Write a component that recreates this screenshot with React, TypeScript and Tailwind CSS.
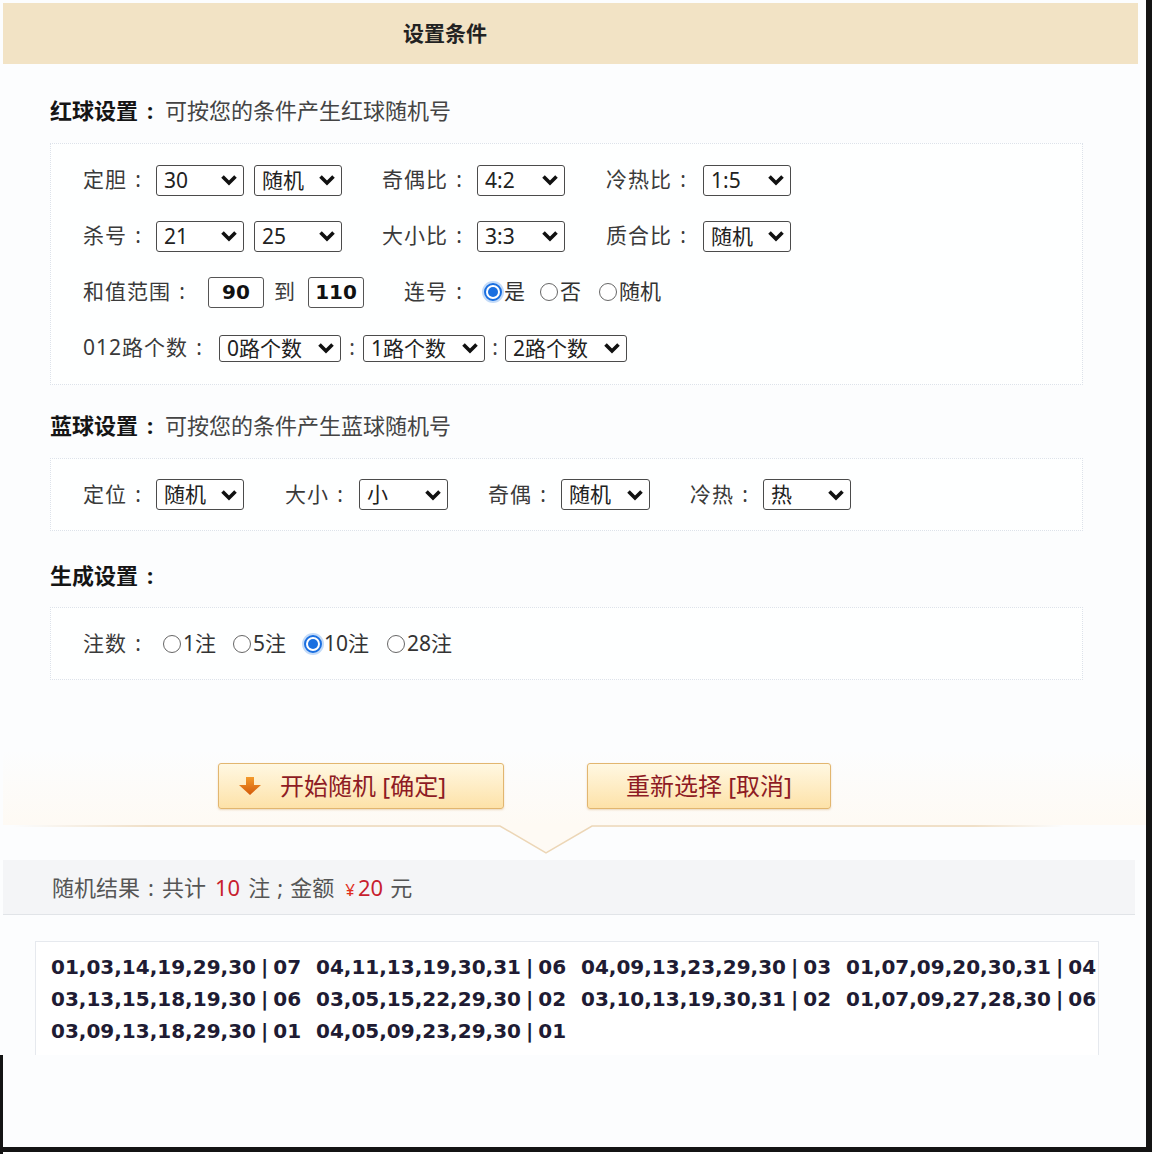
import type { ReactNode } from 'react';

// Lottery random-number settings panel (red ball / blue ball / output)

const results = [
  '01,03,14,19,29,30|07',
  '04,11,13,19,30,31|06',
  '04,09,13,23,29,30|03',
  '01,07,09,20,30,31|04',
  '03,13,15,18,19,30|06',
  '03,05,15,22,29,30|02',
  '03,10,13,19,30,31|02',
  '01,07,09,27,28,30|06',
  '03,09,13,18,29,30|01',
  '04,05,09,23,29,30|01',
];

function Chevron() {
  return (
    <svg width="18" height="12" viewBox="0 0 18 12" className="shrink-0">
      <path d="M2.5 2.5 L9 9 L15.5 2.5" fill="none" stroke="#111" strokeWidth="3.6" strokeLinejoin="miter" />
    </svg>
  );
}

function Select({ value, className }: { value: string; className: string }) {
  return (
    <div
      className={`flex items-center justify-between rounded-[3px] border-[1.5px] border-[#4b4b4b] bg-white pl-[7px] pr-[5px] text-[21px] leading-none text-[#222] ${className}`}
    >
      <span>{value}</span>
      <Chevron />
    </div>
  );
}

function NumInput({ value, className }: { value: string; className: string }) {
  return (
    <div
      className={`flex h-[31px] w-[56px] items-center justify-center rounded-[3px] border-[1.5px] border-[#555] bg-white font-['DejaVu_Sans',sans-serif] text-[20px] font-bold text-[#111] ${className}`}
    >
      {value}
    </div>
  );
}

function Radio({ checked = false, label, className }: { checked?: boolean; label: string; className: string }) {
  return (
    <div className={`flex items-center ${className}`}>
      {checked ? (
        <span className="flex h-[18px] w-[18px] items-center justify-center rounded-full border-2 border-[#1a6fe0] bg-white shadow-[0_0_0_2px_#c3dbf8]">
          <span className="h-[10px] w-[10px] rounded-full bg-[#1a6fe0]" />
        </span>
      ) : (
        <span className="h-[18px] w-[18px] rounded-full border-[1.5px] border-[#666] bg-white" />
      )}
      <span className="ml-[2px] text-[21px] text-[#333]">{label}</span>
    </div>
  );
}

// field label with a centred colon after it
function Label({ children, className = '', colon = true }: { children: ReactNode; className?: string; colon?: boolean }) {
  return (
    <span className={`flex items-center text-[21px] tracking-[1px] text-[#3a3a3a] ${className}`}>
      {children}
      {colon && <span className="inline-block w-[22px] text-center tracking-normal">:</span>}
    </span>
  );
}

function SectionTitle({ title, desc, className }: { title: string; desc?: string; className: string }) {
  return (
    <div className={`flex h-[30px] items-center text-[22px] ${className}`}>
      <span className="font-bold text-[#151515]">{title}</span>
      <span className="inline-block w-[24px] text-center font-bold text-[#151515]">:</span>
      {desc && <span className="ml-[3px] text-[#444]">{desc}</span>}
    </div>
  );
}

function DownArrow() {
  return (
    <svg width="24" height="18" viewBox="0 0 24 18">
      <defs>
        <linearGradient id="arrowFill" x1="0" y1="0" x2="0" y2="1">
          <stop offset="0" stopColor="#f39a2c" />
          <stop offset="1" stopColor="#d35a0a" />
        </linearGradient>
      </defs>
      <path d="M8 0 H16 V8 H23 L12 18 L1 8 H8 Z" fill="url(#arrowFill)" />
    </svg>
  );
}

export default function App() {
  return (
    <div className="relative h-[1154px] w-[1154px] overflow-hidden bg-white font-['Noto_Sans','Noto_Sans_CJK_SC',sans-serif] text-[#333]">
      <div className="h-[1152px] w-[1152px] border-r-[6px] border-b-[5px] border-[#141414] bg-[#fcfdfe] pl-[3px] pt-[3px]">
        <div className="flex h-[61px] w-[1135px] items-center bg-[#f2e3c5] pl-[400px] text-[21px] font-bold text-[#222]">
          设置条件
        </div>

        <div className="pl-[47px]">
          <SectionTitle title="红球设置" desc="可按您的条件产生红球随机号" className="mt-[31px]" />
          <div className="mt-[18px] w-[1033px] border border-dotted border-[#dde2ea] bg-white/70 py-[8px] pl-[32px]">
            <div className="flex h-[56px] items-center">
              <Label>定胆</Label>
              <Select value="30" className="ml-[7px] h-[31px] w-[88px]" />
              <Select value="随机" className="ml-[10px] h-[31px] w-[88px]" />
              <Label className="ml-[40px]">奇偶比</Label>
              <Select value="4:2" className="ml-[7px] h-[31px] w-[88px]" />
              <Label className="ml-[41px]">冷热比</Label>
              <Select value="1:5" className="ml-[9px] h-[31px] w-[88px]" />
            </div>
            <div className="flex h-[56px] items-center">
              <Label>杀号</Label>
              <Select value="21" className="ml-[7px] h-[31px] w-[88px]" />
              <Select value="25" className="ml-[10px] h-[31px] w-[88px]" />
              <Label className="ml-[40px]">大小比</Label>
              <Select value="3:3" className="ml-[7px] h-[31px] w-[88px]" />
              <Label className="ml-[41px]">质合比</Label>
              <Select value="随机" className="ml-[9px] h-[31px] w-[88px]" />
            </div>
            <div className="flex h-[56px] items-center">
              <Label>和值范围</Label>
              <NumInput value="90" className="ml-[15px]" />
              <Label className="ml-[10px]" colon={false}>到</Label>
              <NumInput value="110" className="ml-[12px]" />
              <Label className="ml-[40px]">连号</Label>
              <Radio checked label="是" className="ml-[14px]" />
              <Radio label="否" className="ml-[15px]" />
              <Radio label="随机" className="ml-[18px]" />
            </div>
            <div className="flex h-[56px] items-center">
              <Label>012路个数</Label>
              <Select value="0路个数" className="ml-[9px] h-[27px] w-[122px]" />
              <span className="w-[22px] text-center text-[21px] text-[#444]">:</span>
              <Select value="1路个数" className="h-[27px] w-[122px]" />
              <span className="w-[20px] text-center text-[21px] text-[#444]">:</span>
              <Select value="2路个数" className="h-[27px] w-[122px]" />
            </div>
          </div>

          <SectionTitle title="蓝球设置" desc="可按您的条件产生蓝球随机号" className="mt-[25px]" />
          <div className="mt-[18px] flex h-[73px] w-[1033px] items-center border border-dotted border-[#dde2ea] bg-white/70 pl-[32px]">
            <Label>定位</Label>
            <Select value="随机" className="ml-[7px] h-[31px] w-[88px]" />
            <Label className="ml-[41px]">大小</Label>
            <Select value="小" className="ml-[8px] h-[31px] w-[89px]" />
            <Label className="ml-[40px]">奇偶</Label>
            <Select value="随机" className="ml-[7px] h-[31px] w-[89px]" />
            <Label className="ml-[40px]">冷热</Label>
            <Select value="热" className="ml-[7px] h-[31px] w-[88px]" />
          </div>

          <SectionTitle title="生成设置" className="mt-[29px]" />
          <div className="mt-[17px] flex h-[73px] w-[1033px] items-center border border-dotted border-[#dde2ea] bg-white/70 pl-[32px]">
            <Label>注数</Label>
            <Radio label="1注" className="ml-[14px]" />
            <Radio label="5注" className="ml-[17px]" />
            <Radio checked label="10注" className="ml-[18px]" />
            <Radio label="28注" className="ml-[18px]" />
          </div>
        </div>

        {/* action buttons over a faint warm fade, closed by a notched divider */}
        <div className="mt-[20px] h-[125px] w-[1143px] bg-linear-to-b from-[#fcfdfe] from-40% to-[#fefaf4] pt-[63px]">
          <div className="flex">
            <button className="ml-[215px] flex h-[46px] w-[286px] items-center rounded-[3px] border border-[#e2b66f] bg-linear-to-b from-[#fff8e2] to-[#fde2a8] pl-[19px] text-[24px] text-[#8e1b24] shadow-[0_1px_2px_rgba(200,150,80,0.35)]">
              <DownArrow />
              <span className="ml-[18px]">开始随机 [确定]</span>
            </button>
            <button className="ml-[83px] flex h-[46px] w-[244px] items-center justify-center rounded-[3px] border border-[#e2b66f] bg-linear-to-b from-[#fff8e2] to-[#fde2a8] text-[24px] text-[#8e1b24] shadow-[0_1px_2px_rgba(200,150,80,0.35)]">
              重新选择 [取消]
            </button>
          </div>
        </div>
        <svg width="1143" height="35" viewBox="0 0 1143 35" className="block">
          <defs>
            <linearGradient id="rule" x1="0" y1="0" x2="1" y2="0">
              <stop offset="0" stopColor="#ecd6b6" stopOpacity="0" />
              <stop offset="0.12" stopColor="#ecd6b6" />
              <stop offset="0.85" stopColor="#ecd6b6" />
              <stop offset="0.93" stopColor="#ecd6b6" stopOpacity="0" />
            </linearGradient>
          </defs>
          <path d="M497 0 L543 28 L589 0 Z" fill="#fefaf4" />
          <path d="M10 1 H497 L543 28 L589 1 H1140" fill="none" stroke="url(#rule)" strokeWidth="1.5" />
        </svg>

        <div className="flex h-[55px] w-[1132px] items-center border-b border-[#e1e4e8] bg-[#f4f5f7] pl-[49px] text-[22px] text-[#555]">
          <span>随机结果</span>
          <span className="inline-block w-[22px] text-center">:</span>
          <span>共计</span>
          <span className="ml-[9px] text-[#c81e2e]">10</span>
          <span className="ml-[8px]">注</span>
          <span className="inline-block w-[20px] text-center">;</span>
          <span>金额</span>
          <span className="ml-[11px] text-[#c81e2e]">
            <span className="mr-[3px] text-[17px] text-[#e0301e]">¥</span>20
          </span>
          <span className="ml-[7px]">元</span>
        </div>

        <div className="ml-[32px] mt-[26px] h-[114px] w-[1064px] border-x border-t border-[#e6e9ee] bg-white pl-[15px] pt-[9px]">
          <div className="grid grid-cols-[repeat(4,265px)] font-['DejaVu_Sans',sans-serif] text-[20px] font-bold leading-[32px] text-[#201b33]">
            {results.map((r, i) => {
              const [reds, blue] = r.split('|');
              return (
                <span key={i}>
                  {reds}
                  <span className="mx-[5px]">|</span>
                  {blue}
                </span>
              );
            })}
          </div>
        </div>
      </div>
      <div className="absolute left-0 top-[1055px] h-[99px] w-[3px] bg-[#141414]" />
    </div>
  );
}
